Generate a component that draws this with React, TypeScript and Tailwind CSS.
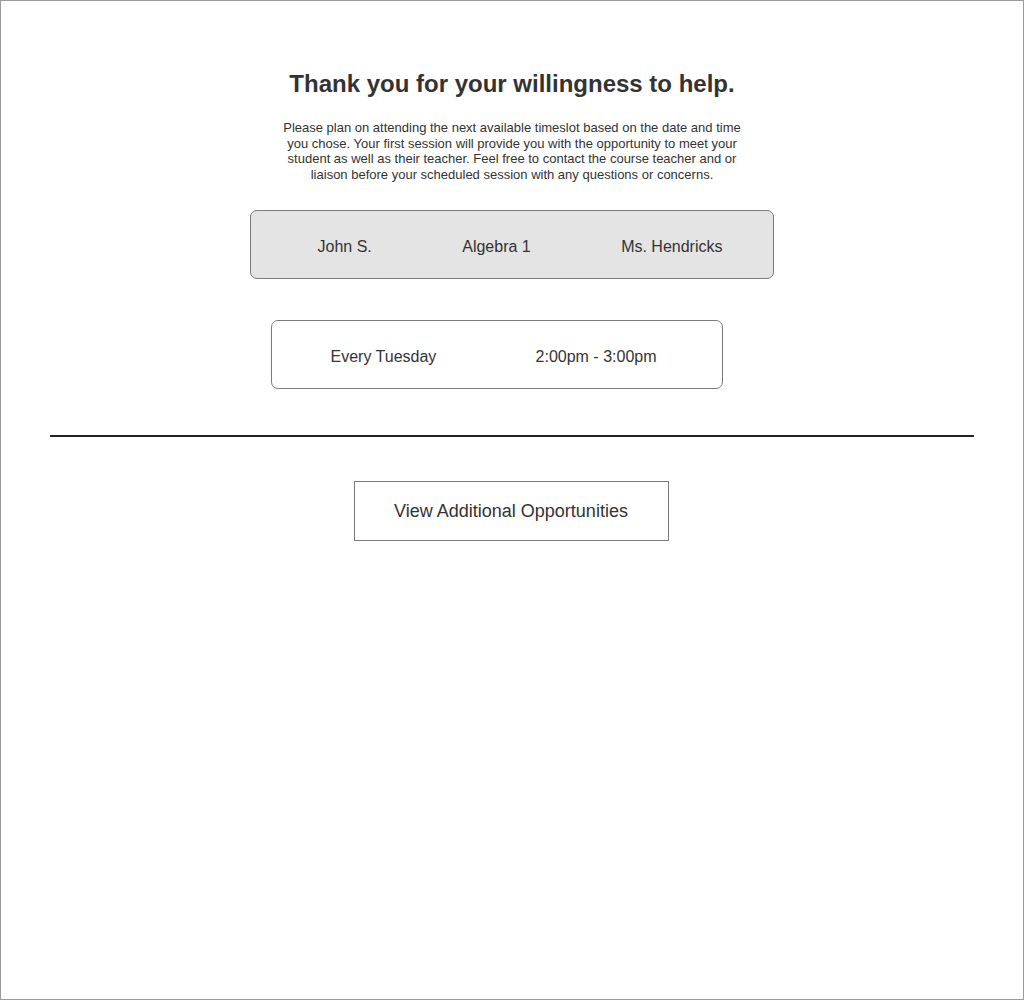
export default function App() {
  return (
    <div className="w-[1024px] h-[1000px] bg-white border border-[#9a9a9a] font-['Liberation_Sans',Arial,sans-serif] text-[#333333]">
      <div className="flex flex-col items-center">
        {/* Heading */}
        <h1 className="mt-[69px] text-[24px] leading-[28px] font-bold">
          Thank you for your willingness to help.
        </h1>

        {/* Intro text */}
        <p className="mt-[22px] w-[470px] text-center text-[13px] leading-[15.6px]">
          Please plan on attending the next available timeslot based on the date and time
          you chose. Your first session will provide you with the opportunity to meet your
          student as well as their teacher. Feel free to contact the course teacher and or
          liaison before your scheduled session with any questions or concerns.
        </p>

        {/* Match summary */}
        <div className="mt-[28px] ml-[-1px] w-[524px] h-[69px] flex items-center justify-between pt-[5px] pl-[67px] pr-[50px] bg-[#e4e4e4] border border-[#7a7a7a] rounded-[7px] text-[16px]">
          <span>John S.</span>
          <span>Algebra 1</span>
          <span>Ms. Hendricks</span>
        </div>

        {/* Schedule */}
        <div className="mt-[41px] ml-[-31px] w-[452px] h-[69px] flex items-center justify-between pt-[5px] pl-[59px] pr-[65px] bg-white border border-[#7a7a7a] rounded-[7px] text-[16px]">
          <span>Every Tuesday</span>
          <span>2:00pm - 3:00pm</span>
        </div>
      </div>

      {/* Divider */}
      <div className="mt-[46px] mx-[49px] h-[1.5px] bg-[#222222]" />

      <div className="flex justify-center">
        <button className="mt-[44px] ml-[-2px] w-[315px] h-[60px] pt-[2px] border border-[#7a7a7a] bg-white text-[18px] text-[#333333]">
          View Additional Opportunities
        </button>
      </div>
    </div>
  );
}
